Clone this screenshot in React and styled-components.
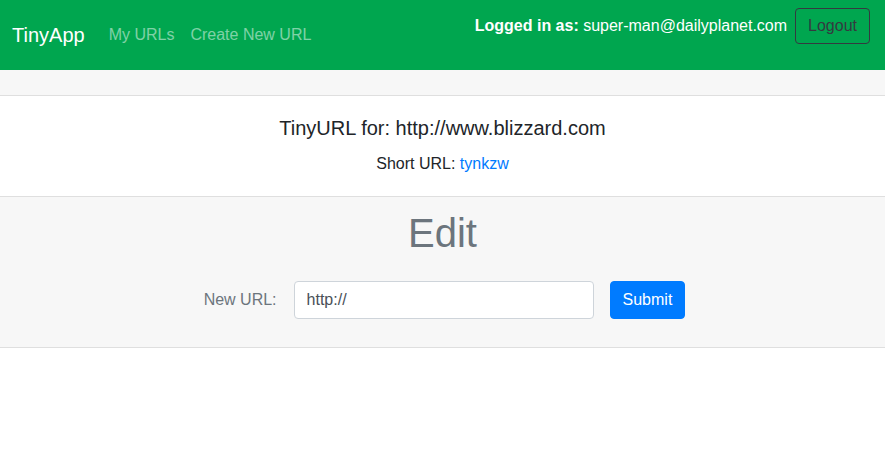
import React from "react";
import styled, { createGlobalStyle } from "styled-components";

const GlobalStyle = createGlobalStyle`
  * { box-sizing: border-box; }
  body {
    margin: 0;
    font-family: "Liberation Sans", Arial, sans-serif;
    font-size: 16px;
    line-height: 1.5;
    color: #212529;
    background: #fff;
  }
`;

const App = () => {
  return (
    <>
      <GlobalStyle />
      <Navbar>
        <Left>
          <Brand href="#">TinyApp</Brand>
          <NavLink href="#">My URLs</NavLink>
          <NavLink href="#">Create New URL</NavLink>
        </Left>
        <Right>
          <UserText>
            <strong>Logged in as:</strong> super-man@dailyplanet.com
          </UserText>
          <LogoutButton type="button">Logout</LogoutButton>
        </Right>
      </Navbar>
      <Card>
        <CardHeader />
        <CardBody>
          <CardTitle>TinyURL for: http://www.blizzard.com</CardTitle>
          <CardText>
            Short URL: <ShortLink href="#">tynkzw</ShortLink>
          </CardText>
        </CardBody>
        <CardFooter>
          <EditTitle>Edit</EditTitle>
          <EditForm onSubmit={(e) => e.preventDefault()}>
            <Label htmlFor="longURL">New URL:</Label>
            <Input id="longURL" type="text" defaultValue="http://" />
            <SubmitButton type="submit">Submit</SubmitButton>
          </EditForm>
        </CardFooter>
      </Card>
    </>
  );
};

export default App;

const Navbar = styled.nav`
  display: flex;
  justify-content: space-between;
  align-items: flex-start;
  height: 70px;
  padding: 8px 15px 8px 12px;
  background-color: #00a64f;
`;

const Left = styled.div`
  display: flex;
  align-items: center;
  align-self: center;
`;

const Brand = styled.a`
  font-size: 20px;
  line-height: 30px;
  color: #fff;
  text-decoration: none;
  margin-right: 16px;
`;

const NavLink = styled.a`
  padding: 0 8px;
  color: rgba(255, 255, 255, 0.5);
  text-decoration: none;
`;

const Right = styled.div`
  display: flex;
  align-items: center;
  gap: 8px;
`;

const UserText = styled.span`
  color: #fff;
`;

const LogoutButton = styled.button`
  font-family: inherit;
  font-size: 16px;
  line-height: 24px;
  padding: 5px 12px;
  color: #343a40;
  background: transparent;
  border: 1px solid #343a40;
  border-radius: 4px;
`;

const Card = styled.div`
  display: flex;
  flex-direction: column;
  text-align: center;
`;

const CardHeader = styled.div`
  height: 26px;
  background: #f7f7f7;
  border-bottom: 1px solid #dfdfdf;
`;

const CardBody = styled.div`
  padding: 20px;
`;

const CardTitle = styled.h5`
  margin: 0 0 12px;
  font-size: 20px;
  font-weight: 400;
  line-height: 1.2;
`;

const CardText = styled.p`
  margin: 0;
`;

const ShortLink = styled.a`
  color: #007bff;
  text-decoration: none;
`;

const CardFooter = styled.div`
  padding: 12px 20px;
  background: #f7f7f7;
  border-top: 1px solid #dfdfdf;
  border-bottom: 1px solid #dfdfdf;
`;

const EditTitle = styled.h1`
  margin: 0 0 8px;
  font-size: 40px;
  font-weight: 400;
  line-height: 1.2;
  color: #6c757d;
`;

const EditForm = styled.form`
  display: flex;
  justify-content: center;
  align-items: center;
  margin: 24px 0 16px;
`;

const Label = styled.label`
  color: #6c757d;
  margin-right: 17px;
  margin-left: 4px;
`;

const Input = styled.input`
  width: 300px;
  height: 38px;
  padding: 6px 12px;
  font-family: inherit;
  font-size: 16px;
  color: #495057;
  background: #fff;
  border: 1px solid #ced4da;
  border-radius: 4px;
  margin-right: 16px;
  outline: none;
`;

const SubmitButton = styled.button`
  height: 38px;
  padding: 6px 12px;
  font-family: inherit;
  font-size: 16px;
  color: #fff;
  background: #007bff;
  border: 1px solid #007bff;
  border-radius: 4px;
`;
